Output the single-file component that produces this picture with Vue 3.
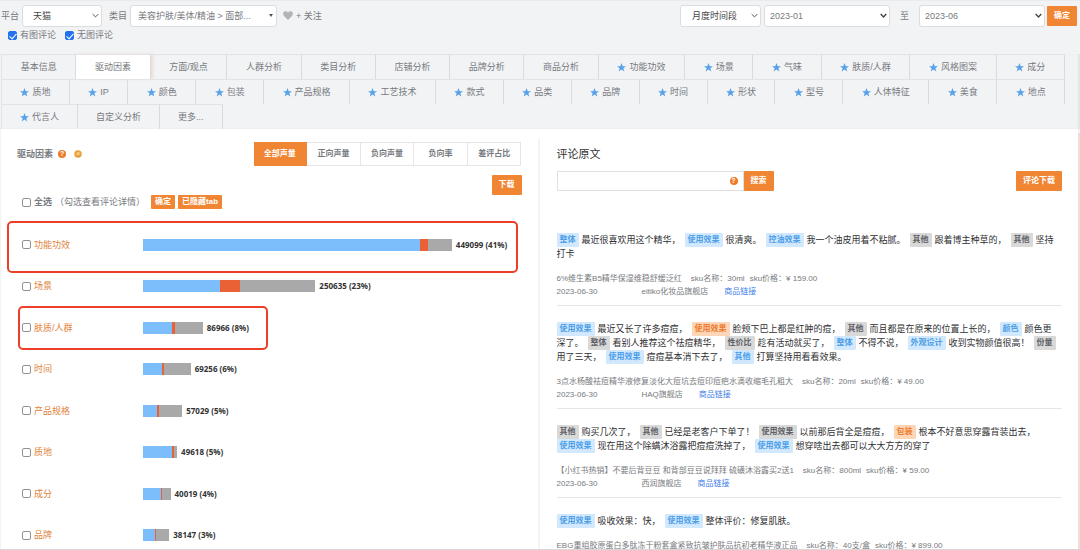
<script setup>
const tabRows = [
  [
    { t: '基本信息' }, { t: '驱动因素', active: true }, { t: '方面/观点' }, { t: '人群分析' },
    { t: '类目分析' }, { t: '店铺分析' }, { t: '品牌分析' }, { t: '商品分析' },
    { t: '功能功效', star: true }, { t: '场景', star: true }, { t: '气味', star: true },
    { t: '肤质/人群', star: true }, { t: '风格图案', star: true }, { t: '成分', star: true },
  ],
  ['质地', 'IP', '颜色', '包装', '产品规格', '工艺技术', '款式', '品类', '品牌', '时间', '形状', '型号', '人体特征', '美食', '地点']
    .map((t) => ({ t, star: true })),
  [{ t: '代言人', star: true }, { t: '自定义分析' }, { t: '更多...' }],
]

const modes = ['全部声量', '正向声量', '负向声量', '负向率', '差评占比']

// pos / neg: share of each bar in percent, the rest is neutral
const max = 449099
const factors = [
  { name: '功能功效', count: 449099, pct: 41, pos: 89.6, neg: 2.8, mark: 'wide' },
  { name: '场景', count: 250635, pct: 23, pos: 44.6, neg: 11.6 },
  { name: '肤质/人群', count: 86966, pct: 8, pos: 48.8, neg: 5, mark: 'narrow' },
  { name: '时间', count: 69256, pct: 6, pos: 40.5, neg: 4 },
  { name: '产品规格', count: 57029, pct: 5, pos: 36.5, neg: 4.5 },
  { name: '质地', count: 49618, pct: 5, pos: 86, neg: 5 },
  { name: '成分', count: 40019, pct: 4, pos: 66, neg: 4.5 },
  { name: '品牌', count: 38147, pct: 3, pos: 46, neg: 5 },
]
const barWidth = (f) => ({ width: (f.count / max) * 81.6 + '%' })

// b / o / g mark blue, orange and grey tags; a bare string is comment text
const reviews = [
  {
    lines: [
      [{ b: '整体' }, '最近很喜欢用这个精华，', { b: '使用效果' }, '很清爽。', { b: '控油效果' }, '我一个油皮用着不粘腻。', { g: '其他' }, '跟着博主种草的，', { g: '其他' }, '坚持'],
      ['打卡'],
    ],
    name: '6%维生素B5精华保湿维稳舒缓泛红', sku: '30ml', price: '159.00', date: '2023-06-30', shop: 'eitiko化妆品旗舰店',
  },
  {
    lines: [
      [{ b: '使用效果' }, '最近又长了许多痘痘，', { o: '使用效果' }, '脸颊下巴上都是红肿的痘，', { g: '其他' }, '而且都是在原来的位置上长的，', { b: '颜色' }, '颜色更'],
      ['深了。', { g: '整体' }, '看别人推荐这个祛痘精华，', { g: '性价比' }, '趁有活动就买了，', { b: '整体' }, '不得不说，', { b: '外观设计' }, '收到实物颜值很高！', { g: '份量' }],
      ['用了三天，', { b: '使用效果' }, '痘痘基本消下去了，', { b: '其他' }, '打算坚持用看看效果。'],
    ],
    name: '3点水杨酸祛痘精华液修复淡化大痘坑去痘印痘疤水滴收缩毛孔粗大', sku: '20ml', price: '49.00', date: '2023-06-30', shop: 'HAQ旗舰店',
  },
  {
    lines: [
      [{ g: '其他' }, '购买几次了，', { g: '其他' }, '已经是老客户下单了！', { g: '使用效果' }, '以前那后背全是痘痘，', { o: '包装' }, '根本不好意思穿露背装出去，'],
      [{ b: '使用效果' }, '现在用这个除螨沐浴露把痘痘洗掉了，', { b: '使用效果' }, '想穿啥出去都可以大大方方的穿了'],
    ],
    name: '【小红书热销】不要后背豆豆 和背部豆豆说拜拜 硫磺沐浴露买2送1', sku: '800ml', price: '59.00', date: '2023-06-30', shop: '西润旗舰店',
  },
  {
    lines: [
      [{ b: '使用效果' }, '吸收效果：快，', { b: '使用效果' }, '整体评价：修复肌肤。'],
    ],
    name: 'EBG重组胶原蛋白多肽冻干粉套盒紧致抗皱护肤品抗初老精华液正品', sku: '40支/盒', price: '899.00',
  },
]
const tone = (s) => (s.b ? 'blue' : s.o ? 'orange' : 'grey')
</script>

<template>
  <div class="page">
    <header class="head">
      <div class="toolbar">
        <label for="platform">平台</label>
        <span class="select platform">
          <select id="platform"><option>天猫</option></select>
          <svg viewBox="0 0 10 6"><path d="M1 1l4 4 4-4" /></svg>
        </span>
        <label id="cat-label" class="cat-label">类目</label>
        <button class="category" type="button" aria-labelledby="cat-label">
          <span>美容护肤/美体/精油 &gt; 面部...</span><i class="caret"></i>
        </button>
        <button class="follow" type="button">
          <svg viewBox="0 0 20 18"><path d="M10 18L2 10C-1 6 0 1 5 0.5C7.500 0.3 9 1.500 10 3.500C11 1.500 12.500 0.3 15 0.500C20 1 21 6 18 10Z" /></svg>
          + 关注
        </button>
        <span class="range">
          <span class="select period">
            <select aria-label="时间段"><option>月度时间段</option></select>
            <svg viewBox="0 0 10 6"><path d="M1 1l4 4 4-4" /></svg>
          </span>
          <span class="select month">
            <select aria-label="开始月份"><option>2023-01</option></select>
            <svg class="bold" viewBox="0 0 10 6"><path d="M1 1l4 4 4-4" /></svg>
          </span>
          <span class="to">至</span>
          <span class="select month">
            <select aria-label="结束月份"><option>2023-06</option></select>
            <svg class="bold" viewBox="0 0 10 6"><path d="M1 1l4 4 4-4" /></svg>
          </span>
          <button class="btn" type="button">确定</button>
        </span>
      </div>
      <div class="checks">
        <label><input type="checkbox" checked />有图评论</label>
        <label><input type="checkbox" checked />无图评论</label>
      </div>
      <nav class="tabs">
        <div v-for="(row, i) in tabRows" :key="i" class="tab-row" :class="{ short: i === 2 }">
          <a v-for="tab in row" :key="tab.t" href="#" class="tab" :class="{ active: tab.active }">
            <svg v-if="tab.star" viewBox="0 0 20 20"><path d="M10 0l2.700 7.200H20l-5.900 4.500L16.300 19 10 14.700 3.700 19l2.200-7.300L0 7.200h7.300z" /></svg>{{ tab.t }}
          </a>
        </div>
      </nav>
    </header>

    <main class="body">
      <section class="factors">
        <div class="factor-head">
          <h2>驱动因素</h2>
          <span class="help">?</span>
          <svg class="coin" viewBox="0 0 16 16"><circle cx="8" cy="8" r="7.500" /><path d="M5.500 10.500C3.500 7 6 4 9 4c2.500 0 3.500 2.500 2 4.500L9.500 11z" /><path class="base" d="M6 12.500h3.500" /></svg>
          <div class="modes">
            <button v-for="(m, i) in modes" :key="m" type="button" :class="{ on: i === 0 }">{{ m }}</button>
          </div>
        </div>
        <div class="download"><button class="btn" type="button">下载</button></div>
        <div class="pick-all">
          <label><input type="checkbox" /><b>全选</b></label>
          <span class="hint">（勾选查看评论详情）</span>
          <button class="mini" type="button">确定</button>
          <button class="mini" type="button">已隐藏tab</button>
        </div>
        <ul class="list">
          <li v-for="f in factors" :key="f.name" :class="f.mark">
            <label><input type="checkbox" />{{ f.name }}</label>
            <div class="track">
              <div class="bar" :style="barWidth(f)">
                <i class="pos" :style="{ width: f.pos + '%' }"></i>
                <i class="neg" :style="{ width: f.neg + '%' }"></i>
              </div>
              <span class="value">{{ f.count }} ({{ f.pct }}%)</span>
            </div>
          </li>
        </ul>
      </section>

      <section class="comments">
        <h2>评论原文</h2>
        <div class="search">
          <span class="field"><input type="text" aria-label="搜索评论" /><span class="help">?</span></span>
          <button class="btn" type="button">搜索</button>
          <button class="btn export" type="button">评论下载</button>
        </div>
        <article v-for="(r, i) in reviews" :key="i" class="review">
          <p v-for="(line, j) in r.lines" :key="j" class="line">
            <template v-for="(s, k) in line" :key="k">
              <span v-if="typeof s === 'string'">{{ s }}</span>
              <b v-else class="tag" :class="tone(s)">{{ s.b || s.o || s.g }}</b>
            </template>
          </p>
          <div class="meta first"><span class="product">{{ r.name }}</span><span>sku名称：{{ r.sku }}</span><span>sku价格：¥ {{ r.price }}</span></div>
          <div v-if="r.date" class="meta"><span class="date">{{ r.date }}</span><span>{{ r.shop }}</span><a href="#">商品链接</a></div>
        </article>
      </section>
    </main>
  </div>
</template>

<style>
body {
  background: #f2f3f5;
}
</style>

<style scoped>
* {
  box-sizing: border-box;
}
.page {
  display: flex;
  flex-direction: column;
  height: 100vh;
  overflow: hidden;
  border-bottom: 1px solid #d8d8da;
  color: #777a7e;
  font: 9px/14px "Liberation Sans", "Noto Sans CJK SC", sans-serif;
}
button, select, input {
  font: inherit;
  color: inherit;
  margin: 0;
}
button {
  border: 0;
  padding: 0;
  background: none;
}
a {
  color: inherit;
  text-decoration: none;
}
h2, p, ul {
  margin: 0;
  padding: 0;
}
.head {
  flex: none;
  padding-top: 3px;
  border-top: 1px solid #eaebed;
}
.toolbar {
  display: flex;
  align-items: center;
  height: 23px;
  padding: 0 3px 0 1px;
}
.select {
  position: relative;
  display: block;
}
.select select {
  appearance: none;
  width: 100%;
  height: 22px;
  border: 1px solid #dcdde0;
  border-radius: 3px;
  background: #fff;
  display: block;
}
.select svg {
  position: absolute;
  right: 3px;
  top: 8px;
  width: 7px;
  height: 5px;
  fill: none;
  stroke: #444;
  stroke-width: 1.3;
}
.select svg.bold {
  stroke-width: 2;
}
.platform {
  width: 80px;
  margin-left: 3px;
}
.platform select {
  padding: 0 10px;
  color: #444;
}
.cat-label {
  margin: 0 3px 0 7px;
}
.category {
  display: flex;
  align-items: center;
  justify-content: space-between;
  width: 147px;
  height: 22px;
  padding: 0 3px 0 7px;
  border: 1px solid #dcdde0;
  border-radius: 3px;
  background: #fff;
}
.caret {
  border: 2px solid transparent;
  border-top: 3px solid #555;
  border-bottom: 0;
}
.follow {
  display: flex;
  align-items: center;
  gap: 3px;
  margin-left: 6px;
}
.follow svg {
  width: 10px;
  height: 9px;
  fill: #b3b4b6;
}
.range {
  display: flex;
  align-items: center;
  margin-left: auto;
}
.period {
  width: 81px;
  margin-right: 3px;
}
.period select {
  padding: 0 11px;
  color: #444;
}
.month {
  width: 126px;
}
.month select {
  padding: 0 5px;
}
.to {
  padding: 0 10px;
}
.btn {
  height: 20px;
  padding: 0 7px;
  border-radius: 1px;
  background: #f08533;
  color: #fff;
  font-size: 8px;
  font-weight: bold;
  white-space: nowrap;
}
.range .btn {
  margin-left: 2px;
}
.checks {
  display: flex;
  gap: 9px;
  height: 16px;
  padding-left: 8px;
}
.checks label, .pick-all label, .list label {
  display: flex;
  align-items: center;
  gap: 3px;
}
input[type='checkbox'] {
  appearance: none;
  flex: none;
  width: 9px;
  height: 9px;
  border: 1px solid #909194;
  border-radius: 2px;
  background: #fff;
  display: grid;
  place-items: center;
}
input[type='checkbox']:checked {
  border-color: #2472f0;
  background: #2472f0;
}
input[type='checkbox']:checked::after {
  content: '';
  width: 3px;
  height: 6px;
  margin-bottom: 1px;
  border: solid #fff;
  border-width: 0 1px 1px 0;
  transform: rotate(42deg);
}
.tabs {
  margin-top: 11px;
  padding: 0 15px 0 1px;
  box-shadow: inset -2px 0 2px #e2e3e5;
}
.tab-row {
  display: flex;
}
.tab {
  display: flex;
  flex: 1 1 auto;
  align-items: center;
  justify-content: center;
  height: 25px;
  padding: 0 17px;
  border-top: 1px solid #e2e3e6;
  border-right: 1px solid #dadbde;
  white-space: nowrap;
}
.tab:first-child {
  border-left: 1px solid #e2e3e6;
}
.short .tab {
  flex: none;
  padding: 0 18px;
}
.tab.active {
  background: #fff;
  box-shadow: 2px 0 3px #ecdcd2;
}
.tab svg {
  width: 9px;
  height: 9px;
  margin-right: 3px;
  fill: #57a1e8;
}
.body {
  flex: 1;
  display: grid;
  grid-template-columns: 1fr 1fr;
  min-height: 0;
  margin: 0 2px 0 1px;
  background: #fff;
  box-shadow: 2px 4px 0 #ebdfda;
}
.factors {
  margin-top: 10px;
  padding: 3px 16px 0 16px;
  border-right: 2px solid #f3f3f5;
}
.factor-head {
  display: flex;
  align-items: center;
  gap: 5px;
}
.factor-head h2 {
  font-size: 9px;
  font-weight: bold;
}
.help {
  width: 8px;
  height: 8px;
  border-radius: 50%;
  background: #ee7b26;
  color: #fff;
  font-size: 7px;
  line-height: 8px;
  font-weight: bold;
  text-align: center;
}
.coin {
  width: 8px;
  height: 8px;
  margin-left: 3px;
  fill: #eba13d;
}
.coin path {
  fill: #f6cc82;
}
.coin .base {
  stroke: #c9832b;
  stroke-width: 1.5;
}
.modes {
  display: flex;
  width: 268px;
  margin-left: auto;
}
.modes button {
  flex: 1;
  height: 24px;
  border: 1px solid #e6e6e8;
  border-left-width: 0;
  font-size: 8px;
  font-weight: bold;
}
.modes .on {
  border-color: #f08533;
  background: #f08533;
  color: #fff;
}
.download {
  display: flex;
  justify-content: flex-end;
  margin-top: 9px;
}
.pick-all {
  display: flex;
  align-items: center;
  height: 14px;
  padding-left: 5px;
}
.hint {
  margin: 0 6px 0 3px;
}
.mini {
  height: 14px;
  margin-right: 3px;
  padding: 0 4px;
  border-radius: 1px;
  background: #f08533;
  color: #fff;
  font-size: 8px;
  font-weight: bold;
  line-height: 14px;
}
.list {
  display: grid;
  grid-auto-rows: 1fr;
  min-height: 332px;
  margin-top: 15px;
  list-style: none;
}
.list li {
  position: relative;
  display: flex;
  align-items: center;
  padding-left: 5px;
}
.list label {
  width: 121px;
  color: #e0833b;
}
.track {
  flex: 1;
  display: flex;
  align-items: center;
  gap: 4px;
}
.bar {
  flex: none;
  display: flex;
  height: 12px;
  background: #a9a9a9;
}
.pos {
  background: #7cbdfb;
}
.neg {
  background: #e96134;
}
.value {
  color: #333;
  font: bold 8px/12px "Noto Sans", sans-serif;
  white-space: nowrap;
}
.wide::after, .narrow::after {
  content: '';
  position: absolute;
  border: 2px solid #ec3f27;
  border-radius: 5px;
  pointer-events: none;
}
.wide::after {
  inset: -3px 4px -7px -10px;
}
.narrow::after {
  top: -1px;
  bottom: -1px;
  left: 1px;
  width: 249px;
  max-width: 65%;
}
.narrow::after {
  width: 246px;
  max-width: none;
}
.comments {
  min-width: 0;
  padding: 17px 16px 0 17px;
}
.comments h2 {
  color: #333;
  font-size: 11px;
  font-weight: normal;
  line-height: 16px;
}
.search {
  display: flex;
  margin: 9px 0 26px;
}
.field {
  position: relative;
  width: 187px;
}
.field input {
  display: block;
  width: 100%;
  height: 20px;
  padding: 0 20px 0 5px;
  border: 1px solid #dfe0e2;
}
.field .help {
  position: absolute;
  top: 6px;
  right: 6px;
}
.export {
  margin-left: auto;
}
.review {
  padding: 16px 0 7px;
  border-bottom: 1px solid #e6e6e8;
}
.review:last-child {
  border-bottom: 0;
}
.line {
  display: flex;
  height: 14px;
  color: #2f3032;
  white-space: nowrap;
}
.tag {
  margin: 0 3px 0 4px;
  padding: 0 3px;
  border-radius: 1px;
  font-size: 8px;
}
.tag:first-child {
  margin-left: 0;
}
.blue {
  background: #d2e8fd;
  color: #4d9fe8;
}
.orange {
  background: #fdd6b8;
  color: #ee7c2c;
}
.grey {
  background: #d9d9da;
  color: #606266;
}
.meta {
  display: flex;
  height: 13px;
  gap: 5px;
  font-size: 8px;
  line-height: 13px;
  white-space: nowrap;
}
.first {
  margin-top: 11px;
}
.product {
  margin-right: 4px;
}
.date {
  width: 80px;
}
.meta a {
  margin-left: 11px;
  color: #3f80e8;
}
</style>
